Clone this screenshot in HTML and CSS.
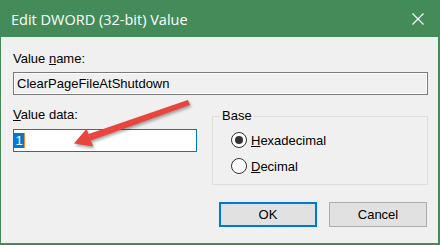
FILE: index.html
```html
<!DOCTYPE html>
<html lang="en">
  <head>
    <meta charset="UTF-8" />
    <title>Edit DWORD (32-bit) Value</title>
    <link rel="stylesheet" href="styles.css">
  </head>
  <body>
    <div class="window">
      <div class="titlebar">
        <span class="title">Edit DWORD (32-bit) Value</span>
        <svg class="close" width="12" height="12" viewBox="0 0 12 12">
          <path d="M0.5 0.5 L11.5 11.5 M11.5 0.5 L0.5 11.5" stroke="#fff" stroke-width="1.2" />
        </svg>
      </div>

      <div class="content">
        <div class="label first">Value <u>n</u>ame:</div>
        <div class="textbox readonly">ClearPageFileAtShutdown</div>

        <div class="row">
          <div class="data">
            <div class="label"><u>V</u>alue data:</div>
            <div class="textbox focused"><span class="selected">1</span><span class="caret"></span></div>
          </div>

          <fieldset class="group">
            <legend>Base</legend>
            <div class="option">
              <span class="radio checked"></span>
              <span><u>H</u>exadecimal</span>
            </div>
            <div class="option">
              <span class="radio"></span>
              <span><u>D</u>ecimal</span>
            </div>
          </fieldset>
        </div>

        <div class="buttons">
          <button class="button default">OK</button>
          <button class="button">Cancel</button>
        </div>
      </div>

      <!-- red arrow drawn over the dialog -->
      <svg class="arrow" width="440" height="245" viewBox="0 0 440 245">
        <polygon points="186.8,100.1 189.2,104.7 89.9,140.5 87.6,134.1" fill="#e8453f" />
        <polygon points="73,143.5 85.6,128.8 92.2,146.6" fill="#e8453f" />
      </svg>
    </div>
  </body>
</html>
```

FILE: styles.css
```css
body {
  margin: 0;
  font-family: "Liberation Sans", Arial, sans-serif;
  font-size: 13px;
  color: #000;
  background-color: #f0f0f0;
}

.window {
  position: relative;
  width: 440px;
  height: 245px;
  box-sizing: border-box;
  background-color: #f0f0f0;
  border-left: 1px solid #438c59;
  border-right: 2px solid #438c59;
  border-bottom: 2px solid #438c59;
}

.titlebar {
  display: flex;
  justify-content: space-between;
  align-items: center;
  height: 37px;
  padding: 0 14px 0 10px;
  background-color: #438c59;
  color: #fff;
}

.title {
  font-family: "Open Sans", "Noto Sans", sans-serif;
  font-size: 14.5px;
  padding-top: 1px;
}

.close {
  display: block;
}

.content {
  padding: 14px 10px 0 12px;
}

.label {
  line-height: 16px;
}

.textbox {
  box-sizing: border-box;
  height: 23px;
  line-height: 21px;
  padding-left: 3px;
  margin-top: 5px;
  border: 1px solid #7a7a7a;
  background-color: #fff;
}

.textbox.readonly {
  background-color: #f0f0f0;
  box-shadow: inset 0 0 0 1px #fff;
}

.textbox.focused {
  display: flex;
  align-items: center;
  padding-left: 0;
  margin-top: 6px;
  border-color: #0078d7;
}

.selected {
  display: inline-block;
  width: 10px;
  height: 15px;
  line-height: 15px;
  text-align: center;
  background-color: #0078d7;
  color: #fff;
}

.caret {
  display: inline-block;
  width: 1px;
  height: 15px;
  background-color: #f08a24;
}

.row {
  display: flex;
  gap: 15px;
}

.data {
  width: 184px;
  padding-top: 12px;
}

.group {
  flex: 1;
  margin: 13px 0 0 0;
  padding: 3px 0 5px 18px;
  min-width: 0;
  border: 1px solid #dcdcdc;
}

.group legend {
  padding: 0 2px;
  margin-left: -11px;
  line-height: 16px;
}

.option {
  display: flex;
  align-items: center;
  gap: 4px;
  height: 26px;
}

.radio {
  position: relative;
  box-sizing: border-box;
  width: 16px;
  height: 16px;
  border: 1px solid #333;
  border-radius: 50%;
  background-color: #fff;
}

.radio.checked::after {
  content: "";
  position: absolute;
  left: 3px;
  top: 3px;
  width: 8px;
  height: 8px;
  border-radius: 50%;
  background-color: #333;
}

.buttons {
  display: flex;
  justify-content: flex-end;
  gap: 12px;
  margin-top: 17px;
  padding-right: 1px;
}

.button {
  box-sizing: border-box;
  width: 98px;
  height: 25px;
  padding: 0;
  font-family: "Liberation Sans", Arial, sans-serif;
  font-size: 13px;
  color: #000;
  background-color: #e1e1e1;
  border: 1px solid #adadad;
}

.button.default {
  border: 2px solid #0078d7;
}

.arrow {
  position: absolute;
  left: 0;
  top: 0;
  filter: drop-shadow(1px 2px 1.5px rgba(0, 0, 0, 0.35));
}
```
